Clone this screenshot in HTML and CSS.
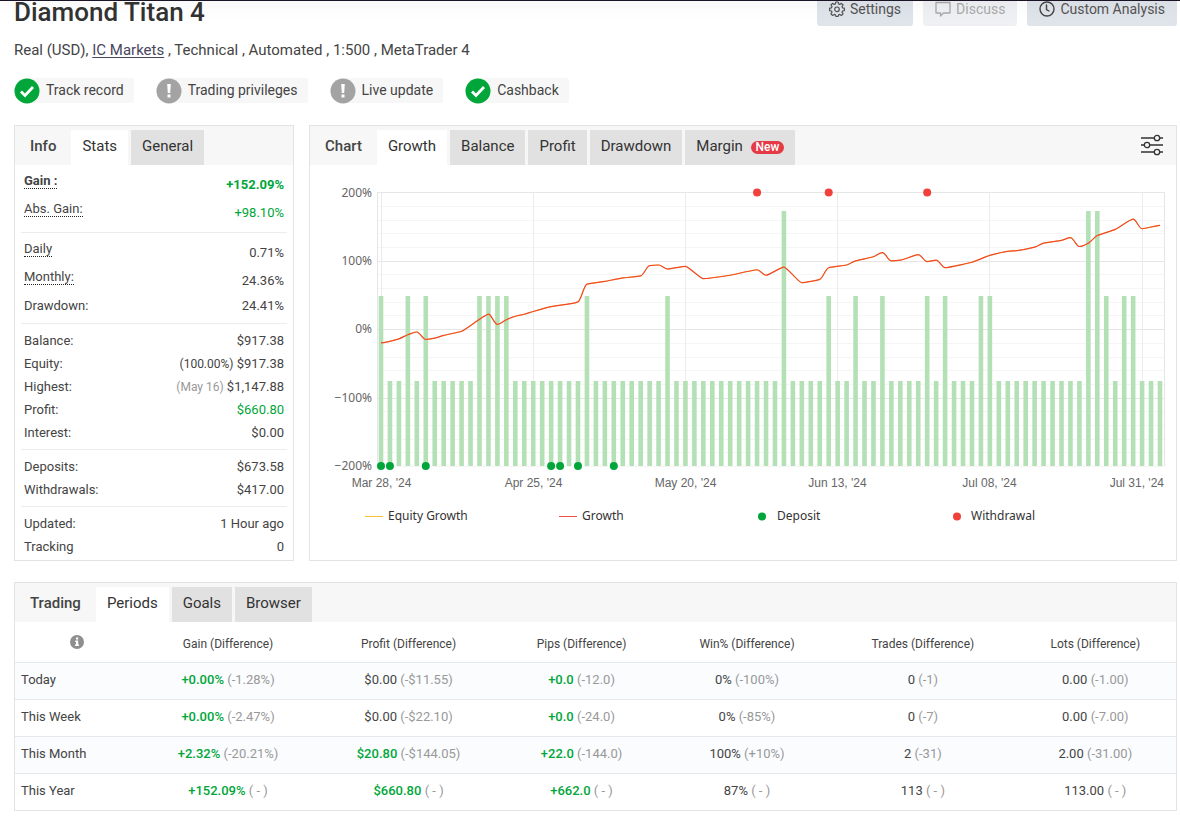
FILE: index.html
```html
<!DOCTYPE html>
<html lang="en">

<head>
	<meta charset="utf-8">
	<title>Diamond Titan 4</title>
	<link rel="stylesheet" href="styles.css">
	<script src="chart.js" defer></script>
</head>

<body>
	<div class="topbar"></div>
	<main class="page">
		<header class="head">
			<h1>Diamond Titan 4</h1>
			<div class="actions">
				<button type="button" class="action">
					<svg width="16" height="16" viewBox="0 0 16 16" fill="none" stroke="#555" stroke-width="1.2" stroke-linejoin="round">
						<path d="M6.8 1h2.4l.4 1.9 1.2.5 1.6-1.1 1.7 1.7-1.1 1.6.5 1.2 1.9.4v2.4l-1.9.4-.5 1.2 1.1 1.6-1.7 1.7-1.6-1.1-1.2.5-.4 1.5H6.8l-.4-1.5-1.2-.5-1.6 1.1-1.7-1.7L3 11.2l-.5-1.2-1.9-.4V7.2l1.9-.4L3 5.6 1.9 4l1.7-1.7 1.6 1.1 1.2-.5z" />
						<circle cx="8" cy="8.3" r="2.3" />
					</svg>
					Settings
				</button>
				<button type="button" class="action" disabled>
					<svg width="16" height="16" viewBox="0 0 16 16" fill="none" stroke="#555" stroke-width="1.3" stroke-linejoin="round">
						<path d="M1 1.5h14V12H8.5l-3 3v-3H1z" />
					</svg>
					Discuss
				</button>
				<button type="button" class="action">
					<svg width="16" height="16" viewBox="0 0 16 16" fill="none" stroke="#444" stroke-width="1.4" stroke-linecap="round">
						<circle cx="8" cy="8" r="7" />
						<path d="M7.5 4v4.5L10 10" />
					</svg>
					Custom Analysis
				</button>
			</div>
		</header>

		<p class="details">Real (USD), <a href="#">IC Markets</a> , Technical , Automated , 1:500 , MetaTrader 4</p>

		<ul class="badges">
			<li class="badge">
				<svg width="26" height="26" viewBox="0 0 26 26"><circle cx="13" cy="13" r="12.5" fill="#00a63a" /><path d="M7 13.500l4 4 8-8.500" fill="none" stroke="#fff" stroke-width="2.8" /></svg>
				<span>Track record</span>
			</li>
			<li class="badge">
				<svg width="26" height="26" viewBox="0 0 26 26"><circle cx="13" cy="13" r="12.5" fill="#a3a3a3" /><path d="M11.200 6h3.600l-.6 9h-2.400zM11.500 16.500h3v3h-3z" fill="#fff" /></svg>
				<span>Trading privileges</span>
			</li>
			<li class="badge">
				<svg width="26" height="26" viewBox="0 0 26 26"><circle cx="13" cy="13" r="12.5" fill="#a3a3a3" /><path d="M11.200 6h3.600l-.6 9h-2.400zM11.500 16.500h3v3h-3z" fill="#fff" /></svg>
				<span>Live update</span>
			</li>
			<li class="badge">
				<svg width="26" height="26" viewBox="0 0 26 26"><circle cx="13" cy="13" r="12.5" fill="#00a63a" /><path d="M7 13.500l4 4 8-8.500" fill="none" stroke="#fff" stroke-width="2.8" /></svg>
				<span>Cashback</span>
			</li>
		</ul>

		<div class="columns">
			<!-- account stats -->
			<section class="panel panel-info">
				<div class="tabs">
					<h2>Info</h2>
					<button type="button" class="tab active">Stats</button>
					<button type="button" class="tab">General</button>
				</div>
				<div class="stats">
					<dl class="loose">
						<div class="row tall"><dt class="hint bold">Gain :</dt><dd class="green bold">+152.09%</dd></div>
						<div class="row tall"><dt class="hint">Abs. Gain:</dt><dd class="green">+98.10%</dd></div>
					</dl>
					<dl class="loose">
						<div class="row tall"><dt class="hint">Daily</dt><dd>0.71%</dd></div>
						<div class="row tall"><dt class="hint">Monthly:</dt><dd>24.36%</dd></div>
						<div class="row"><dt>Drawdown:</dt><dd>24.41%</dd></div>
					</dl>
					<dl>
						<div class="row"><dt>Balance:</dt><dd>$917.38</dd></div>
						<div class="row"><dt>Equity:</dt><dd><span class="small">(100.00%)</span> $917.38</dd></div>
						<div class="row"><dt>Highest:</dt><dd><span class="small grey">(May 16)</span> $1,147.88</dd></div>
						<div class="row"><dt>Profit:</dt><dd class="green">$660.80</dd></div>
						<div class="row"><dt>Interest:</dt><dd>$0.00</dd></div>
					</dl>
					<dl>
						<div class="row"><dt>Deposits:</dt><dd>$673.58</dd></div>
						<div class="row"><dt>Withdrawals:</dt><dd>$417.00</dd></div>
					</dl>
					<dl>
						<div class="row"><dt>Updated:</dt><dd>1 Hour ago</dd></div>
						<div class="row"><dt>Tracking</dt><dd>0</dd></div>
					</dl>
				</div>
			</section>

			<!-- growth chart, drawn by chart.js -->
			<section class="panel panel-chart">
				<div class="tabs">
					<h2>Chart</h2>
					<button type="button" class="tab active">Growth</button>
					<button type="button" class="tab">Balance</button>
					<button type="button" class="tab">Profit</button>
					<button type="button" class="tab">Drawdown</button>
					<button type="button" class="tab">Margin <span class="new">New</span></button>
					<button type="button" class="filter" aria-label="Chart options">
						<svg width="24" height="22" viewBox="0 0 24 22" fill="#f7f7f7" stroke="#333" stroke-width="1.3">
							<path d="M1 4h22M1 11h22M1 18h22" />
							<circle cx="17" cy="4" r="2.7" />
							<circle cx="7" cy="11" r="2.7" />
							<circle cx="17" cy="18" r="2.7" />
						</svg>
					</button>
				</div>
				<svg id="chart" class="chart" viewBox="0 0 866 390"></svg>
			</section>
		</div>

		<section class="panel">
			<div class="tabs">
				<h2>Trading</h2>
				<button type="button" class="tab active">Periods</button>
				<button type="button" class="tab">Goals</button>
				<button type="button" class="tab">Browser</button>
			</div>
			<table class="periods">
				<thead>
					<tr>
						<th class="col-name"><svg width="14" height="14" viewBox="0 0 14 14" aria-label="Info"><circle cx="7" cy="7" r="7" fill="#8f8f8f" /><path d="M6 2.500h2.200v2H6zM5.200 5.600h3v4H9V11H5V9.600h1V7h-.8z" fill="#fff" /></svg></th>
						<th class="col-gain">Gain (Difference)</th>
						<th class="col-profit">Profit (Difference)</th>
						<th class="col-pips">Pips (Difference)</th>
						<th class="col-win">Win% (Difference)</th>
						<th class="col-trades">Trades (Difference)</th>
						<th>Lots (Difference)</th>
					</tr>
				</thead>
				<tbody>
					<tr>
						<td>Today</td>
						<td><span class="green">+0.00%</span> <span class="grey">(-1.28%)</span></td>
						<td>$0.00 <span class="grey">(-$11.55)</span></td>
						<td><span class="green">+0.0</span> <span class="grey">(-12.0)</span></td>
						<td>0% <span class="grey">(-100%)</span></td>
						<td>0 <span class="grey">(-1)</span></td>
						<td>0.00 <span class="grey">(-1.00)</span></td>
					</tr>
					<tr>
						<td>This Week</td>
						<td><span class="green">+0.00%</span> <span class="grey">(-2.47%)</span></td>
						<td>$0.00 <span class="grey">(-$22.10)</span></td>
						<td><span class="green">+0.0</span> <span class="grey">(-24.0)</span></td>
						<td>0% <span class="grey">(-85%)</span></td>
						<td>0 <span class="grey">(-7)</span></td>
						<td>0.00 <span class="grey">(-7.00)</span></td>
					</tr>
					<tr>
						<td>This Month</td>
						<td><span class="green">+2.32%</span> <span class="grey">(-20.21%)</span></td>
						<td><span class="green">$20.80</span> <span class="grey">(-$144.05)</span></td>
						<td><span class="green">+22.0</span> <span class="grey">(-144.0)</span></td>
						<td>100% <span class="grey">(+10%)</span></td>
						<td>2 <span class="grey">(-31)</span></td>
						<td>2.00 <span class="grey">(-31.00)</span></td>
					</tr>
					<tr>
						<td>This Year</td>
						<td><span class="green">+152.09%</span> <span class="grey">( - )</span></td>
						<td><span class="green">$660.80</span> <span class="grey">( - )</span></td>
						<td><span class="green">+662.0</span> <span class="grey">( - )</span></td>
						<td>87% <span class="grey">( - )</span></td>
						<td>113 <span class="grey">( - )</span></td>
						<td>113.00 <span class="grey">( - )</span></td>
					</tr>
				</tbody>
			</table>
		</section>
	</main>
</body>

</html>
```
FILE: styles.css
```css
* {
	box-sizing: border-box;
}

body {
	margin: 0;
	background: #fff;
	color: #444;
	font-family: Roboto, "Liberation Sans", sans-serif;
	font-size: 13px;
}

button {
	border: 0;
	font-family: inherit;
	color: inherit;
}

/* bottom edge of the sticky navigation */
.topbar {
	position: relative;
	z-index: 1;
	height: 1px;
	background: #1b1326;
	box-shadow: 0 1px 16px rgba(27, 19, 38, 0.4);
}

.page {
	padding: 0 3px 8px 14px;
}

.head {
	display: flex;
	justify-content: space-between;
	align-items: flex-start;
	height: 36px;
}

h1 {
	margin: 0;
	font-size: 26px;
	line-height: 22px;
	font-weight: 500;
	color: #333;
}

.actions {
	display: flex;
	gap: 10px;
}

.action {
	display: flex;
	align-items: center;
	gap: 5px;
	height: 25px;
	padding: 0 12px 9px;
	border-radius: 0 0 3px 3px;
	background: #dfe3ea;
	font-size: 14px;
	color: #555;
}

.action:disabled {
	opacity: 0.5;
}

.details {
	margin: 0;
	font-size: 15px;
	line-height: 26px;
}

.details a {
	color: #4a4560;
	text-underline-offset: 2px;
}

.badges {
	display: flex;
	gap: 22px;
	margin: 0;
	padding: 15px 0 22px;
	list-style: none;
}

.badge {
	display: flex;
	align-items: center;
	height: 25px;
	padding-right: 10px;
	border-radius: 13px 2px 2px 13px;
	background: #f7f7f7;
	font-size: 14px;
}

.badge span {
	margin-left: 6px;
	padding-bottom: 2px;
}

.columns {
	display: flex;
	gap: 15px;
	margin-bottom: 21px;
}

.panel {
	border: 1px solid #e3e3e3;
}

.panel-info {
	width: 280px;
}

.panel-chart {
	flex: 1;
}

.tabs {
	display: flex;
	height: 39px;
	padding-top: 4px;
	background: #f7f7f7;
}

.tabs h2 {
	margin: 0;
	padding: 0 15px;
	font-size: 15px;
	line-height: 32px;
	font-weight: 500;
}

.tab {
	margin-right: 3px;
	padding: 0 11px 3px;
	background: #e1e1e1;
	font-size: 15px;
	color: #333;
}

.tab.active {
	background: #fff;
}

.new {
	display: inline-block;
	margin-left: 4px;
	padding: 0 5px;
	border-radius: 7px;
	background: #e63946;
	color: #fff;
	font-size: 12px;
	line-height: 13px;
	font-weight: 500;
}

.filter {
	margin-left: auto;
	padding: 0 12px 6px 0;
	background: none;
}

.filter svg {
	display: block;
}

.stats {
	padding: 0 6px;
}

.stats dl {
	margin: 0;
	padding: 5px 3px;
}

.stats dl + dl {
	border-top: 1px solid #ececec;
}

.stats .loose {
	padding-bottom: 6px;
}

.stats dl:last-child {
	padding-bottom: 2px;
}

.row {
	display: flex;
	justify-content: space-between;
	align-items: center;
	height: 23px;
}

.row.tall {
	height: 28px;
}

.row dd {
	margin: 0;
}

.hint {
	margin-bottom: 5px;
	border-bottom: 1px dotted #222;
	line-height: 14px;
}

.small {
	font-size: 12px;
}

.bold {
	font-weight: 700;
}

.green {
	color: #00a63a;
}

.grey {
	color: #999;
}

.chart {
	display: block;
	width: 100%;
	font-size: 12px;
}

.chart .x-label {
	font-family: "Liberation Sans", Arial, sans-serif;
	fill: #666;
}

.chart .y-label {
	font-family: "Noto Sans", sans-serif;
	fill: #666;
}

.chart .legend {
	font-family: "Noto Sans", sans-serif;
	fill: #333;
}

.periods {
	width: 100%;
	border-collapse: collapse;
	table-layout: fixed;
}

.periods th,
.periods td {
	padding: 0;
	text-align: center;
}

.periods th {
	height: 40px;
	padding-top: 4px;
	font-size: 12px;
	font-weight: 400;
}

.periods td {
	height: 37px;
	padding-bottom: 2px;
	border-top: 1px solid #e4e8ec;
}

.periods td:first-child {
	padding-left: 6px;
	text-align: left;
}

.periods tbody tr:nth-child(odd) {
	background: #fafcfe;
}

.periods .green {
	font-weight: 500;
}

.col-name {
	width: 10.7%;
}

.col-gain {
	width: 15.3%;
}

.col-profit,
.col-trades {
	width: 15.8%;
}

.col-pips {
	width: 14%;
}

.col-win {
	width: 14.5%;
}
```
FILE: chart.js
```js
const chart = document.getElementById("chart");
const plot = { left: 67, right: 855, top: 27.5, bottom: 301 };
const start = 71;
const step = 8.954;

const xOf = i => start + i * step;
const yOf = pct => plot.bottom - (pct + 200) / 400 * (plot.bottom - plot.top);

function add(name, attrs, text) {
	const el = document.createElementNS("http://www.w3.org/2000/svg", name);
	for (const key in attrs) el.setAttribute(key, attrs[key]);
	if (text) el.textContent = text;
	chart.appendChild(el);
}

// grid
for (let pct = -200; pct <= 200; pct += 20) {
	const y = Math.round(yOf(pct) - 0.1) + 0.5;
	const major = pct % 100 === 0 && pct > -200;
	add("path", { d: `M${plot.left} ${y}H${plot.right}`, stroke: major ? "#e6e6e6" : "#f5f5f5" });
}
for (let pct = -200; pct <= 200; pct += 100) {
	add("text", { x: 62, y: Math.round(yOf(pct)) + 4, "text-anchor": "end", class: "y-label" }, (pct < 0 ? "\u2212" : "") + Math.abs(pct) + "%");
}
const ticks = [[0, "Mar 28, '24"], [17, "Apr 25, '24"], [34, "May 20, '24"], [51, "Jun 13, '24"], [68, "Jul 08, '24"], [85, "Jul 31, '24"]];
for (const [i, label] of ticks) {
	const x = Math.floor(xOf(i)) + 0.5;
	const last = i === 85;
	add("path", { d: `M${x} ${plot.top}V${plot.bottom}`, stroke: "#ececec" });
	add("text", { x: last ? 854 : x, y: 322, "text-anchor": last ? "end" : "middle", class: "x-label" }, label);
}
add("path", { d: `M${plot.left + 0.5} ${plot.top}V${plot.bottom}M${plot.right - 0.5} ${plot.top}V${plot.bottom}`, stroke: "#e6e6e6" });

// number of trades per day, 1 unless listed here
const trades = { 0: 2, 3: 2, 5: 2, 11: 2, 12: 2, 13: 2, 14: 2, 23: 2, 32: 2, 45: 3, 50: 2, 53: 2, 56: 2, 61: 2, 63: 2, 67: 2, 68: 2, 79: 3, 80: 3, 81: 2, 83: 2, 84: 2 };
for (let i = 0; i < 88; i++) {
	const h = (trades[i] || 1) * 85;
	add("rect", { x: xOf(i) - 2.3, y: plot.bottom - h, width: 4.6, height: h, fill: "#b4e0b6" });
}

// growth line, [day, percent]
const growth = [
	[0, -20], [2, -14], [3, -8], [4, -4], [5, -15], [6, -13], [7, -9], [9, -3], [12, 22], [13, 7],
	[14, 14], [15, 19], [16, 22], [17, 26], [19, 33], [21, 37], [22, 40], [23, 66], [25, 70], [27, 75],
	[29, 78], [30, 93], [31, 94], [32, 88], [34, 92], [36, 74], [39, 79], [42, 87], [43, 79],
	[45, 91], [47, 68], [49, 73], [50, 90], [52, 94], [53, 100], [55, 106], [56, 112], [57, 100], [58, 101],
	[60, 109], [61, 99], [62, 101], [63, 90], [65, 95], [66, 98], [68, 108], [70, 114],
	[71, 115], [73, 120], [74, 126], [76, 130], [77, 134], [78, 121], [79, 126], [80, 137], [82, 146],
	[84, 161], [85, 147], [87, 152]
];
const pts = growth.map(([i, pct]) => [xOf(i), yOf(pct)]);

// slope is flat at peaks, averaged elsewhere
function slope(k) {
	if (k === 0 || k === pts.length - 1) return 0;
	const a = (pts[k][1] - pts[k - 1][1]) / (pts[k][0] - pts[k - 1][0]);
	const b = (pts[k + 1][1] - pts[k][1]) / (pts[k + 1][0] - pts[k][0]);
	return a * b <= 0 ? 0 : 2 * a * b / (a + b);
}
let d = `M${pts[0]}`;
for (let k = 1; k < pts.length; k++) {
	const [x0, y0] = pts[k - 1];
	const [x1, y1] = pts[k];
	const third = Math.min((x1 - x0) / 3, 3);
	d += `C${x0 + third} ${y0 + slope(k - 1) * third} ${x1 - third} ${y1 - slope(k) * third} ${x1} ${y1}`;
}
add("path", { d: d, fill: "none", stroke: "#fbc02d" });
add("path", { d: d, fill: "none", stroke: "#f04a28", "stroke-width": 1.2 });

// deposits and withdrawals
for (const i of [0, 1, 5, 19, 20, 22, 26]) {
	add("circle", { cx: xOf(i), cy: plot.bottom, r: 4, fill: "#00a63a" });
}
for (const i of [42, 50, 61]) {
	add("circle", { cx: xOf(i), cy: plot.top, r: 4, fill: "#f0413c" });
}

// legend
add("path", { d: "M55 351.500H73", stroke: "#fbc02d" });
add("text", { x: 78, y: 355, class: "legend" }, "Equity Growth");
add("path", { d: "M249 351.500H267", stroke: "#f0524a" });
add("text", { x: 272, y: 355, class: "legend" }, "Growth");
add("circle", { cx: 452, cy: 351.5, r: 4, fill: "#00a63a" });
add("text", { x: 467, y: 355, class: "legend" }, "Deposit");
add("circle", { cx: 647, cy: 351.5, r: 4, fill: "#f0413c" });
add("text", { x: 661, y: 355, class: "legend" }, "Withdrawal");
```
